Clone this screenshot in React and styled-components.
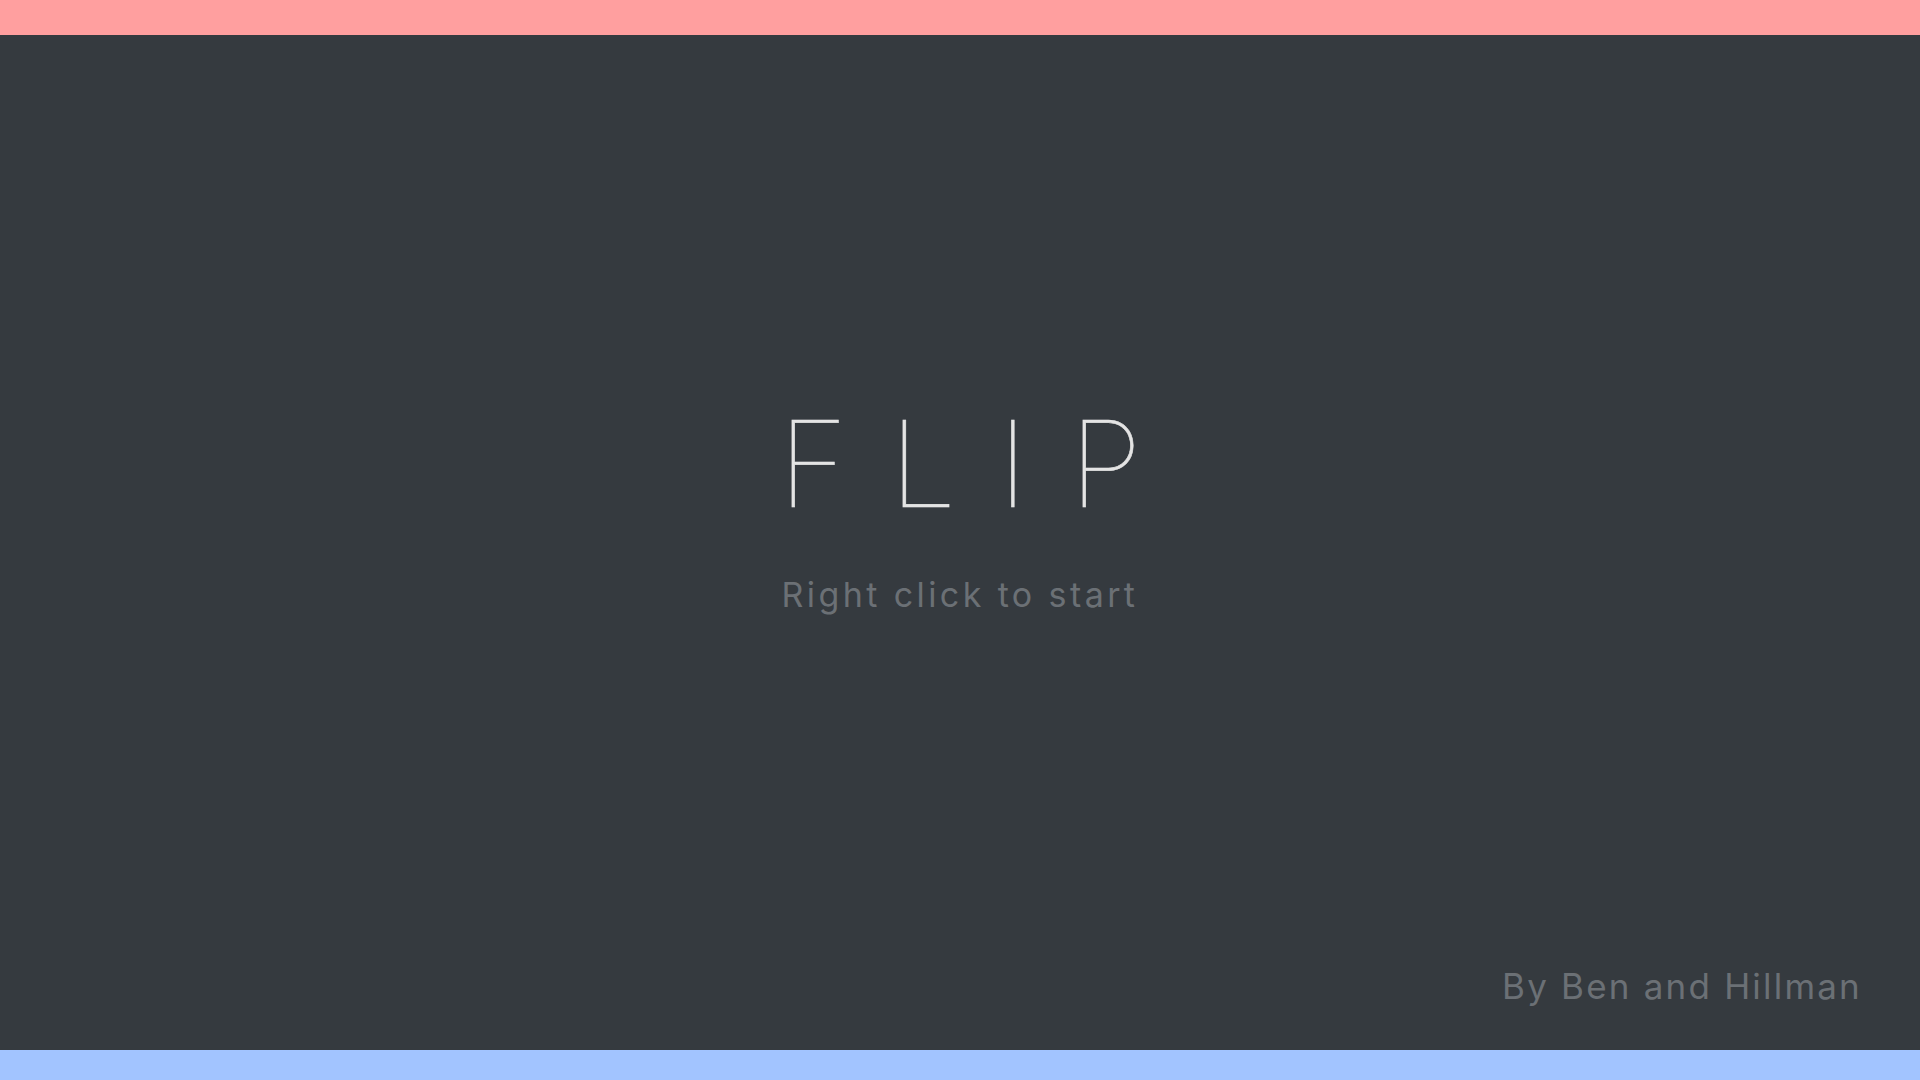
import styled, { createGlobalStyle } from 'styled-components';

const GlobalStyle = createGlobalStyle`
  html, body {
    margin: 0;
    padding: 0;
    height: 100%;
    background: #353a3f;
  }
  #root {
    height: 100%;
  }
`;

const Page = styled.div`
  display: flex;
  flex-direction: column;
  height: 100vh;
  font-family: Inter, 'Noto Sans', sans-serif;
`;

const Stripe = styled.div`
  flex: none;
  height: ${({ size }) => size}px;
  background: ${({ color }) => color};
`;

const Main = styled.main`
  flex: 1;
  display: flex;
  flex-direction: column;
  background: #353a3f;
`;

const Hero = styled.div`
  flex: 1;
  display: flex;
  flex-direction: column;
  align-items: center;
  justify-content: center;
  padding-top: 20px;
`;

const Title = styled.h1`
  margin: 0;
  font-size: 119px;
  font-weight: 100;
  line-height: 1;
  letter-spacing: 0.35em;
  padding-left: 0.35em;
  color: #e4e4e4;
  -webkit-text-stroke: 0.6px #e4e4e4;
`;

const Subtitle = styled.p`
  margin: 50px 0 0;
  font-size: 34px;
  font-weight: 400;
  letter-spacing: 3.4px;
  color: #6b7075;
`;

const Credit = styled.footer`
  align-self: flex-end;
  padding: 0 58px 43px 0;
  font-size: 35px;
  letter-spacing: 2.2px;
  color: #6b7075;
`;

export default function App() {
  return (
    <>
      <GlobalStyle />
      <Page>
        <Stripe size={35} color="#ff9f9f" />
        <Main>
          <Hero>
            <Title>FLIP</Title>
            <Subtitle>Right click to start</Subtitle>
          </Hero>
          <Credit>By Ben and Hillman</Credit>
        </Main>
        <Stripe size={30} color="#a2c4ff" />
      </Page>
    </>
  );
}
